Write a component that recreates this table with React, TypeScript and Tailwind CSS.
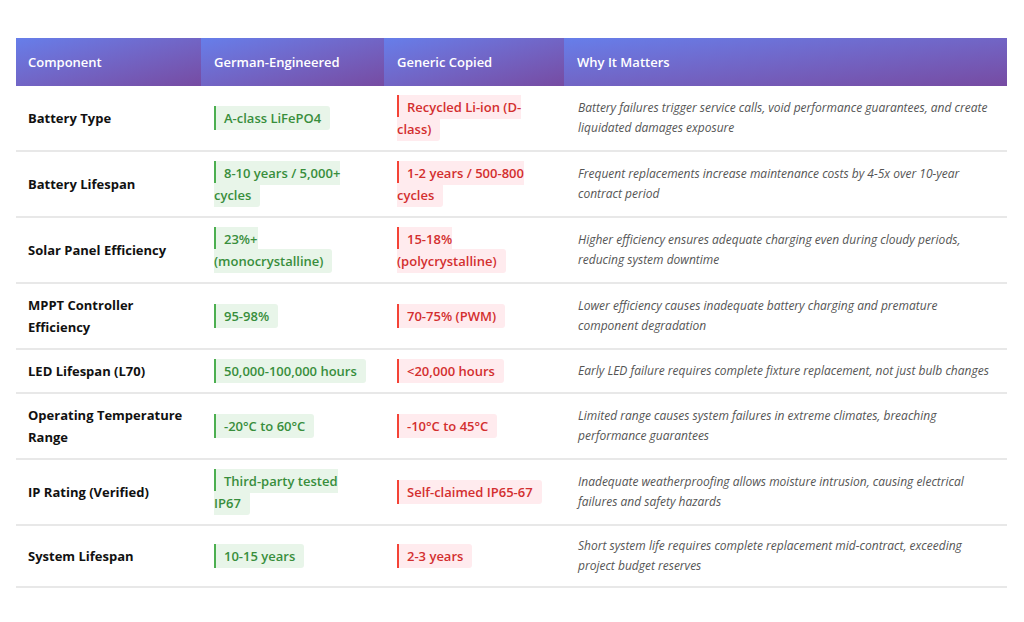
import React from "react";

const rows = [
  {
    name: "Battery Type",
    good: "A-class LiFePO4",
    bad: "Recycled Li-ion (D-class)",
    why: "Battery failures trigger service calls, void performance guarantees, and create liquidated damages exposure",
  },
  {
    name: "Battery Lifespan",
    good: "8-10 years / 5,000+ cycles",
    bad: "1-2 years / 500-800 cycles",
    why: "Frequent replacements increase maintenance costs by 4-5x over 10-year contract period",
  },
  {
    name: "Solar Panel Efficiency",
    good: "23%+ (monocrystalline)",
    bad: "15-18% (polycrystalline)",
    why: "Higher efficiency ensures adequate charging even during cloudy periods, reducing system downtime",
  },
  {
    name: "MPPT Controller Efficiency",
    good: "95-98%",
    bad: "70-75% (PWM)",
    why: "Lower efficiency causes inadequate battery charging and premature component degradation",
  },
  {
    name: "LED Lifespan (L70)",
    good: "50,000-100,000 hours",
    bad: "<20,000 hours",
    why: "Early LED failure requires complete fixture replacement, not just bulb changes",
  },
  {
    name: "Operating Temperature Range",
    good: "-20°C to 60°C",
    bad: "-10°C to 45°C",
    why: "Limited range causes system failures in extreme climates, breaching performance guarantees",
  },
  {
    name: "IP Rating (Verified)",
    good: "Third-party tested IP67",
    bad: "Self-claimed IP65-67",
    why: "Inadequate weatherproofing allows moisture intrusion, causing electrical failures and safety hazards",
  },
  {
    name: "System Lifespan",
    good: "10-15 years",
    bad: "2-3 years",
    why: "Short system life requires complete replacement mid-contract, exceeding project budget reserves",
  },
];

const headers = ["Component", "German-Engineered", "Generic Copied", "Why It Matters"];

export default function App() {
  return (
    <div className="w-[1024px] h-[622px] bg-white pt-[38px] px-4 font-['Open_Sans',sans-serif]">
      <table className="w-[991px] border-collapse table-fixed">
        <colgroup>
          <col className="w-[185px]" />
          <col className="w-[183px]" />
          <col className="w-[180px]" />
          <col className="w-[443px]" />
        </colgroup>
        <thead>
          <tr>
            {headers.map((h, i) => (
              <th
                key={h}
                className={
                  (i === 0 ? "pl-3 " : "pl-[13px] ") +
                  "h-[48px] pr-3 pt-[2px] text-left text-[13px] font-semibold text-white bg-gradient-to-br from-[#667eea] to-[#764ba2]"
                }
              >
                {h}
              </th>
            ))}
          </tr>
        </thead>
        <tbody>
          {rows.map((r) => (
            <tr key={r.name} className="border-b-2 border-[#e8e8e8]">
              <td className="px-3 py-[10px] text-[13px] leading-[22px] font-bold text-[#111]">{r.name}</td>
              <td className="pl-[13px] pr-3 py-[10px] text-[13px] leading-[22px]">
                <span className="bg-[#e8f5e9] text-[#388e3c] font-semibold border-l-2 border-[#4caf50] pl-2 pr-[9px] py-[3px] rounded-r-[3px]">
                  {r.good}
                </span>
              </td>
              <td className="pl-[13px] pr-3 py-[10px] text-[13px] leading-[22px]">
                <span className="bg-[#ffebee] text-[#d32f2f] font-semibold border-l-2 border-[#f44336] pl-2 pr-[9px] py-[3px] rounded-r-[3px]">
                  {r.bad}
                </span>
              </td>
              <td className="pl-[14px] pr-3 py-[10px] text-[12px] leading-[20px] italic text-[#555]">{r.why}</td>
            </tr>
          ))}
        </tbody>
      </table>
    </div>
  );
}
